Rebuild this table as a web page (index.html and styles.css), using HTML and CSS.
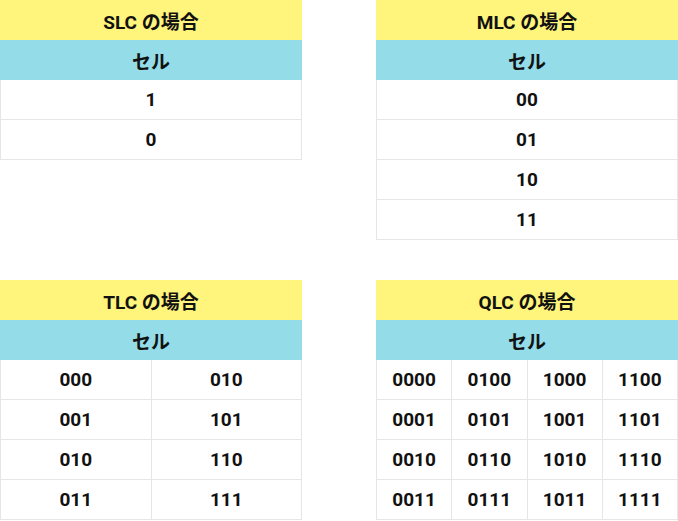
FILE: index.html
```html
<!DOCTYPE html>
<html lang="ja">
<head>
<meta charset="utf-8">
<link rel="stylesheet" href="styles.css">
</head>
<body>
<div class="board">
  <div class="card">
    <div class="head">SLC の場合</div>
    <div class="sub">セル</div>
    <div class="grid c1">
      <div class="cell">1</div>
      <div class="cell">0</div>
    </div>
  </div>
  <div class="card">
    <div class="head">MLC の場合</div>
    <div class="sub">セル</div>
    <div class="grid c1">
      <div class="cell">00</div>
      <div class="cell">01</div>
      <div class="cell">10</div>
      <div class="cell">11</div>
    </div>
  </div>
  <div class="card">
    <div class="head">TLC の場合</div>
    <div class="sub">セル</div>
    <div class="grid c2">
      <div class="cell">000</div><div class="cell">010</div>
      <div class="cell">001</div><div class="cell">101</div>
      <div class="cell">010</div><div class="cell">110</div>
      <div class="cell">011</div><div class="cell">111</div>
    </div>
  </div>
  <div class="card">
    <div class="head">QLC の場合</div>
    <div class="sub">セル</div>
    <div class="grid c4">
      <div class="cell">0000</div><div class="cell">0100</div><div class="cell">1000</div><div class="cell">1100</div>
      <div class="cell">0001</div><div class="cell">0101</div><div class="cell">1001</div><div class="cell">1101</div>
      <div class="cell">0010</div><div class="cell">0110</div><div class="cell">1010</div><div class="cell">1110</div>
      <div class="cell">0011</div><div class="cell">0111</div><div class="cell">1011</div><div class="cell">1111</div>
    </div>
  </div>
</div>
</body>
</html>
```
FILE: styles.css
```css
html, body {
  margin: 0;
  padding: 0;
  background: #ffffff;
}
body {
  font-family: Roboto, "Noto Sans CJK JP", sans-serif;
  font-weight: 700;
  font-size: 19px;
  color: #111111;
}
.board {
  display: grid;
  grid-template-columns: 302px 302px;
  column-gap: 74px;
  row-gap: 40px;
  align-items: start;
  width: 678px;
}
.card {
  display: flex;
  flex-direction: column;
}
.head, .sub {
  height: 40px;
  display: flex;
  align-items: center;
  justify-content: center;
}
.head {
  background: #fff47c;
}
.sub {
  background: #93dce8;
}
.grid {
  display: grid;
  border-left: 1px solid #e6e6e6;
}
.c1 { grid-template-columns: 1fr; }
.c2 { grid-template-columns: 1fr 1fr; }
.c4 { grid-template-columns: 1fr 1fr 1fr 1fr; }
.cell {
  height: 39px;
  display: flex;
  align-items: center;
  justify-content: center;
  border-right: 1px solid #e6e6e6;
  border-bottom: 1px solid #e6e6e6;
}
```
